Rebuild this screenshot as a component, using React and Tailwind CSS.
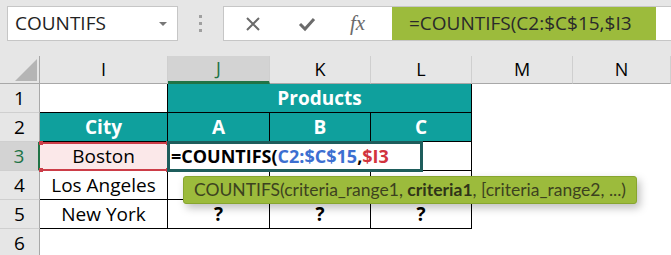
import React from "react";

const teal = "bg-[#0fa09d] text-white font-bold";
const cellB = "border-r border-b border-black";

function ColHead({ label, active }) {
  return (
    <div
      className={
        "flex items-center justify-center border-r border-[#cfcfcf] text-[18px] " +
        (active
          ? "bg-[#d3d3d3] border-b-[3px] border-b-[#217346] text-[#217346]"
          : "bg-[#e6e6e6] border-b border-b-[#a8a8a8] text-black")
      }
    >
      {label}
    </div>
  );
}

function RowHead({ n, active }) {
  return (
    <div
      className={
        "flex items-center justify-center border-b border-[#cfcfcf] text-[19px] " +
        (active
          ? "bg-[#d3d3d3] border-r-[2px] border-r-[#217346] text-[#217346]"
          : "bg-[#e6e6e6] border-r border-r-[#a8a8a8] text-black")
      }
    >
      {n}
    </div>
  );
}

export default function App() {
  return (
    <div className="w-[671px] h-[255px] overflow-hidden bg-white font-['Open_Sans',sans-serif]">
      {/* toolbar */}
      <div className="h-[56px] bg-[#e6e6e6] flex items-start pt-[6px]">
        <div className="ml-[7px] w-[171px] h-[35px] bg-white border border-[#c6c6c6] flex items-center justify-between pl-[7px] pr-[10px]">
          <span className="text-[19px] text-[#222]">COUNTIFS</span>
          <span className="w-0 h-0 border-l-[4px] border-r-[4px] border-t-[4px] border-l-transparent border-r-transparent border-t-[#777]"></span>
        </div>
        <div className="w-[45px] h-[35px] flex flex-col items-center justify-center gap-[4px]">
          <span className="w-[3px] h-[3px] bg-[#a0a0a0]"></span>
          <span className="w-[3px] h-[3px] bg-[#a0a0a0]"></span>
          <span className="w-[3px] h-[3px] bg-[#a0a0a0]"></span>
        </div>
        <div className="flex-1 h-[35px] bg-white border border-[#c6c6c6] border-r-0 flex items-stretch">
          <div className="w-[168px] flex items-center">
            <svg width="16" height="16" viewBox="0 0 16 16" className="ml-[21px]">
              <path d="M2 2 L14 14 M14 2 L2 14" stroke="#6b6b6b" strokeWidth="2" fill="none" />
            </svg>
            <svg width="18" height="16" viewBox="0 0 18 16" className="ml-[37px]">
              <path d="M2 8 L7 13 L16 3" stroke="#6b6b6b" strokeWidth="3" fill="none" />
            </svg>
            <span className="ml-[34px] text-[21px] italic text-[#6b6b6b] font-['Liberation_Serif',serif] leading-none">
              fx
            </span>
          </div>
          <div className="w-[264px] bg-[#9cbb3c] flex items-center pl-[17px] text-[19px] text-[#2a2a2a] whitespace-nowrap">
            =COUNTIFS(C2:$C$15,$I3
          </div>
          <div className="flex-1"></div>
        </div>
      </div>

      {/* sheet */}
      <div className="relative grid grid-cols-[40px_128px_102px_101px_101px_101px_98px] grid-rows-[28px_29px_29px_29px_29px_29px_29px] text-[19px] text-black">
        {/* header row */}
        <div className="bg-[#e6e6e6] border-r border-b border-[#a8a8a8] relative">
          <svg width="22" height="22" viewBox="0 0 22 22" className="absolute left-[15px] top-[3px]">
            <polygon points="22,0 22,22 0,22" fill="#b5b5b5" />
          </svg>
        </div>
        <ColHead label="I" />
        <ColHead label="J" active />
        <ColHead label="K" />
        <ColHead label="L" />
        <ColHead label="M" />
        <ColHead label="N" />

        {/* row 1 */}
        <RowHead n="1" />
        <div className={cellB}></div>
        <div className={"col-span-3 flex items-center justify-center " + teal + " " + cellB}>Products</div>
        <div></div>
        <div></div>

        {/* row 2 */}
        <RowHead n="2" />
        <div className={"flex items-center justify-center " + teal + " " + cellB}>City</div>
        <div className={"flex items-center justify-center " + teal + " " + cellB}>A</div>
        <div className={"flex items-center justify-center " + teal + " " + cellB}>B</div>
        <div className={"flex items-center justify-center " + teal + " " + cellB}>C</div>
        <div></div>
        <div></div>

        {/* row 3 */}
        <RowHead n="3" active />
        <div className="relative flex items-center justify-center bg-[#fbe8e9] border-y-2 border-[#cc3d48] border-r border-r-black">
          Boston
          <span className="absolute left-[-1px] top-[-3px] w-[4px] h-[4px] bg-[#cc3d48]"></span>
          <span className="absolute left-[-1px] bottom-[-3px] w-[4px] h-[4px] bg-[#cc3d48]"></span>
          <span className="absolute right-[-3px] top-[-3px] w-[4px] h-[4px] bg-[#cc3d48]"></span>
          <span className="absolute right-[-3px] bottom-[-3px] w-[4px] h-[4px] bg-[#cc3d48]"></span>
        </div>
        <div className={cellB}></div>
        <div className={cellB}></div>
        <div className={cellB}></div>
        <div></div>
        <div></div>

        {/* row 4 */}
        <RowHead n="4" />
        <div className={"flex items-center justify-center " + cellB}>Los Angeles</div>
        <div className={cellB}></div>
        <div className={cellB}></div>
        <div className={cellB}></div>
        <div></div>
        <div></div>

        {/* row 5 */}
        <RowHead n="5" />
        <div className={"flex items-center justify-center " + cellB}>New York</div>
        <div className={"flex items-center justify-center font-bold " + cellB}>?</div>
        <div className={"flex items-center justify-center font-bold " + cellB}>?</div>
        <div className={"flex items-center justify-center font-bold " + cellB}>?</div>
        <div></div>
        <div></div>

        {/* row 6 */}
        <RowHead n="6" />
        <div></div>
        <div></div>
        <div></div>
        <div></div>
        <div></div>
        <div></div>

        {/* in-cell editor */}
        <div className="absolute left-[167px] top-[85px] w-[256px] h-[31px] bg-white border-[3px] border-[#1e5d5c] flex items-center pl-[1px] font-bold text-[18px] whitespace-nowrap">
          <span>=COUNTIFS(</span>
          <span className="text-[#3c6fd1]">C2:$C$15</span>
          <span>,</span>
          <span className="text-[#d1343e]">$I3</span>
        </div>

        {/* function tooltip */}
        <div className="absolute left-[183px] top-[120px] w-[454px] h-[28px] bg-[#9cbb3c] border border-[#87a52f] rounded-[3px] shadow-[3px_4px_8px_rgba(0,0,0,0.25)] flex items-center pl-[10px] text-[17.5px] text-[#3c421f] whitespace-nowrap font-['Lato',sans-serif]">
          COUNTIFS(criteria_range1,&nbsp;<b className="font-bold text-[#2f3418]">criteria1</b>, [criteria_range2, ...)
        </div>
      </div>
    </div>
  );
}
